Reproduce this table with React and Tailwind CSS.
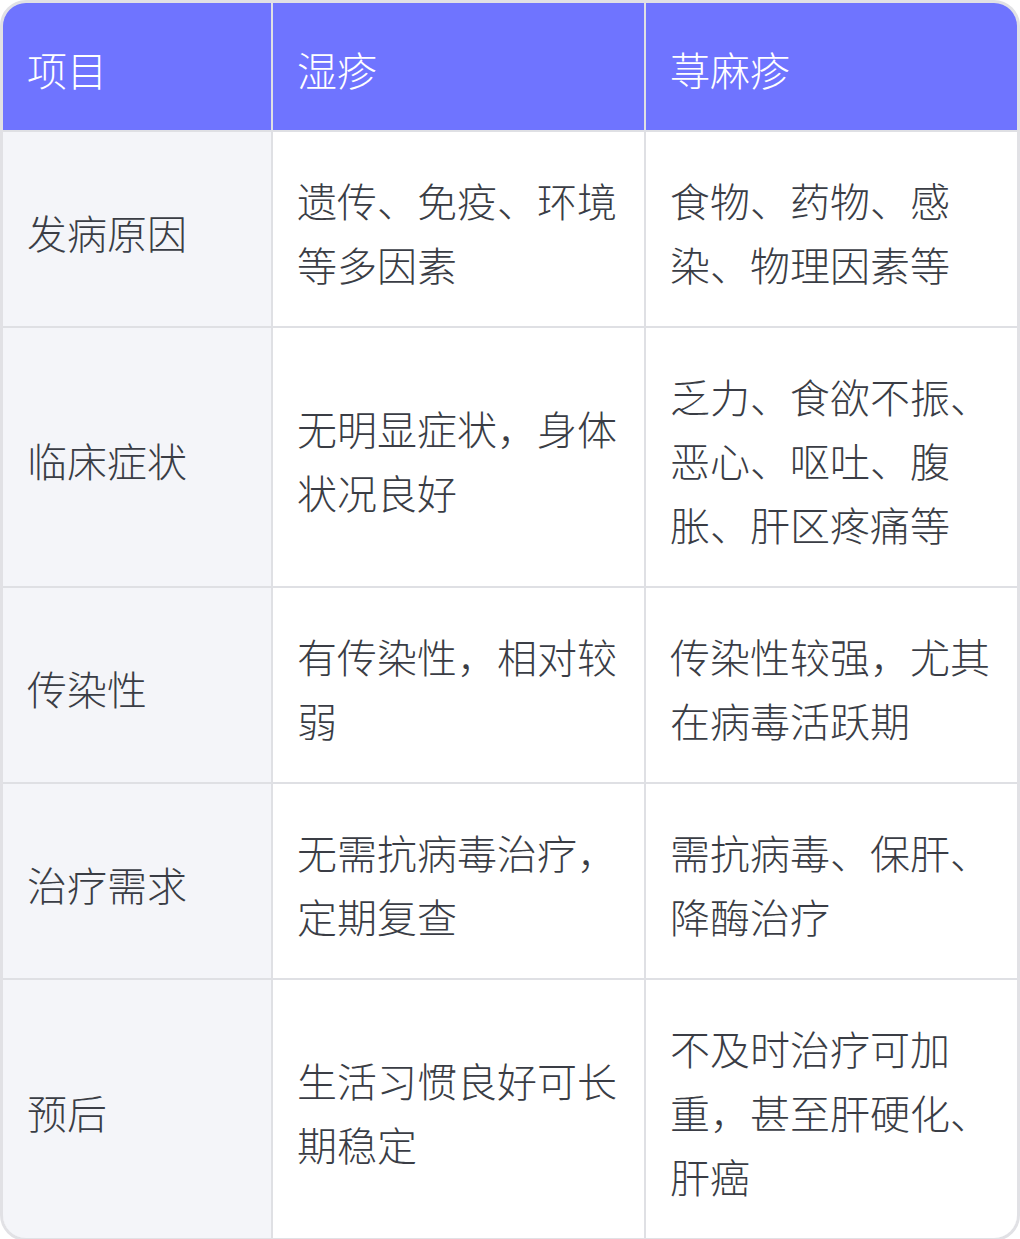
const rows = [
  ["发病原因", "遗传、免疫、环境等多因素", "食物、药物、感染、物理因素等"],
  ["临床症状", "无明显症状，身体状况良好", "乏力、食欲不振、恶心、呕吐、腹胀、肝区疼痛等"],
  ["传染性", "有传染性，相对较弱", "传染性较强，尤其在病毒活跃期"],
  ["治疗需求", "无需抗病毒治疗，定期复查", "需抗病毒、保肝、降酶治疗"],
  ["预后", "生活习惯良好可长期稳定", "不及时治疗可加重，甚至肝硬化、肝癌"],
];

export default function App() {
  return (
    <div
      className="w-[1020px] h-[1239px] bg-white"
      style={{ fontFamily: '"Noto Sans CJK SC", "Noto Sans", sans-serif' }}
    >
      <div className="overflow-hidden rounded-[26px] border-[3px] border-[#e1e1e5]">
        <div className="grid grid-cols-[268px_371px_371px] gap-[2px] bg-[#dfe0e4] text-[40px] font-light leading-[64px] text-[#3a3d45]">
          {["项目", "湿疹", "荨麻疹"].map((h) => (
            <div key={h} className="flex h-[127px] items-center bg-[#6f74ff] px-6 pt-[5px] text-white">
              {h}
            </div>
          ))}
          {rows.map((r) => (
            <div key={r[0]} className="contents">
              <div className="flex items-center bg-[#f4f5f9] px-6 pt-[36px] pb-[30px]">{r[0]}</div>
              <div className="flex items-center bg-white px-6 pt-[36px] pb-[30px]">
                <span>{r[1]}</span>
              </div>
              <div className="flex items-center bg-white px-6 pt-[36px] pb-[30px]">
                <span>{r[2]}</span>
              </div>
            </div>
          ))}
        </div>
      </div>
    </div>
  );
}
